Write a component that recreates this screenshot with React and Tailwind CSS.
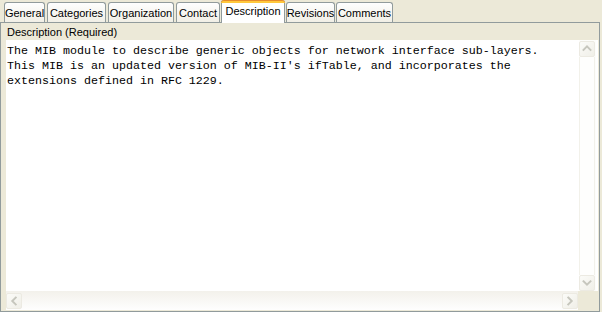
import React from "react";

const tabs = [
  { label: "General", cls: "ml-[4px] w-[41px]" },
  { label: "Categories", cls: "ml-[2px] w-[59px]" },
  { label: "Organization", cls: "ml-[2px] w-[66px]" },
  { label: "Contact", cls: "ml-[2px] w-[44px]" },
  { label: "Description", cls: "ml-[1px] w-[64px]", active: true },
  { label: "Revisions", cls: "ml-[1px] w-[49px]" },
  { label: "Comments", cls: "ml-[1px] w-[57px]" },
];

function Chevron({ dir }) {
  const paths = {
    up: "M4 9 L8 5 L12 9",
    down: "M4 6 L8 10 L12 6",
    left: "M10 4 L6 8 L10 12",
    right: "M6 4 L10 8 L6 12",
  };
  return (
    <svg width="16" height="16" viewBox="0 0 16 16">
      <path d={paths[dir]} fill="none" stroke="#c6c6bd" strokeWidth="2.2" strokeLinecap="square" strokeLinejoin="miter" />
    </svg>
  );
}

function ScrollBtn({ dir }) {
  return (
    <div className="w-[16px] h-[16px] shrink-0 rounded-[2px] border border-[#eceae2] bg-gradient-to-br from-[#fbfbf8] to-[#f0efe8] flex items-center justify-center">
      <Chevron dir={dir} />
    </div>
  );
}

export default function App() {
  return (
    <div
      className="w-[602px] h-[312px] bg-[#ece9d8] flex flex-col overflow-hidden"
      style={{ fontFamily: '"Liberation Sans", Arial, sans-serif' }}
    >
      <div className="flex items-end h-[22px] relative z-10">
        {tabs.map((t) =>
          t.active ? (
            <div
              key={t.label}
              className={`${t.cls} h-[23px] -mb-[1px] bg-white border-x border-[#919b9c] rounded-t-[3px] flex flex-col`}
            >
              <div className="h-[3px] bg-[#ffc83c] border-t border-[#e68b2c] rounded-t-[3px] -mx-[1px]" />
              <div className="flex-1 flex items-start justify-center pt-[2px] text-[11px] text-black leading-[13px]">
                {t.label}
              </div>
            </div>
          ) : (
            <div
              key={t.label}
              className={`${t.cls} h-[20px] border border-b-0 border-[#919b9c] rounded-t-[3px] bg-gradient-to-b from-[#fefefe] to-[#f1efe6] flex items-center justify-center text-[11px] text-black leading-[13px] pt-[1px]`}
            >
              {t.label}
            </div>
          )
        )}
      </div>
      <div className="w-[600px] h-[290px] border border-[#919b9c] bg-[#ece9d8] flex flex-col pl-[5px] pr-[1px]">
        <div className="h-[17px] pl-[1px] pt-[3px] text-[11px] leading-[13px] text-black">
          Description (Required)
        </div>
        <div className="flex-1 bg-white flex flex-col">
          <div className="flex flex-1 min-h-0">
            <div
              className="flex-1 pl-[1px] pt-[4px] text-[11.67px] leading-[15px] text-black whitespace-pre"
              style={{ fontFamily: '"Liberation Mono", "Courier New", monospace' }}
            >
              {"The MIB module to describe generic objects for network interface sub-layers.\nThis MIB is an updated version of MIB-II's ifTable, and incorporates the\nextensions defined in RFC 1229."}
            </div>
            <div className="w-[17px] flex flex-col pt-[1px] pr-[1px] bg-[#fdfdfb] mr-[2px]">
              <ScrollBtn dir="up" />
              <div className="flex-1 border-x border-[#f2f1ea] bg-[#fefefd]" />
              <ScrollBtn dir="down" />
            </div>
          </div>
          <div className="h-[19px] flex bg-gradient-to-b from-[#f3f1eb] to-[#fefefe]">
            <div className="flex-1 flex items-center">
              <ScrollBtn dir="left" />
              <div className="flex-1" />
              <ScrollBtn dir="right" />
            </div>
            <div className="w-[20px] bg-[#ece9d8]" />
          </div>
        </div>
        <div className="h-[1px]" />
      </div>
    </div>
  );
}
